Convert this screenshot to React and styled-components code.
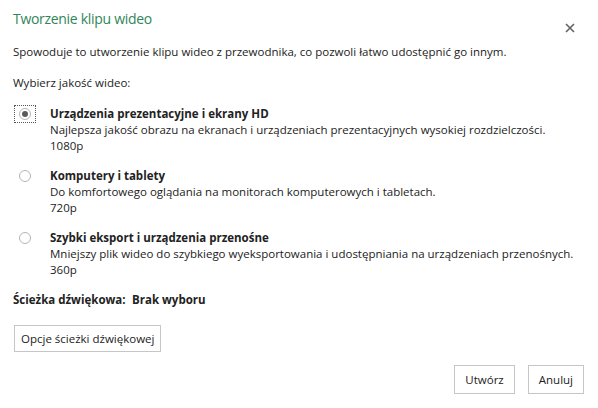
import React from 'react'
import styled, { createGlobalStyle } from 'styled-components'

const GlobalStyle = createGlobalStyle`
  html, body {
    margin: 0;
    padding: 0;
    background: #fff;
  }
  body {
    font-family: "Segoe UI", "Open Sans", "Noto Sans", sans-serif;
    font-size: 11.5px;
    color: #222;
  }
`;

const Dialog = styled.div`
  width: 598px;
  height: 408px;
  box-sizing: border-box;
  padding: 7px 14px 0 13px;
  display: flex;
  flex-direction: column;
`;

const Header = styled.div`
  height: 24px;
  display: flex;
  justify-content: space-between;
  align-items: flex-start;
`;

const Title = styled.h1`
  margin: 0;
  font-size: 14px;
  font-weight: 400;
  letter-spacing: -0.3px;
  line-height: 24px;
  color: #31855a;
`;

const CloseButton = styled.button`
  margin: 14px 7px 0 0;
  padding: 0;
  width: 14px;
  height: 14px;
  border: 0;
  background: none;
  display: flex;
  align-items: center;
  justify-content: center;
`;

const Text = styled.p`
  margin: ${p => p.$top || 0}px 0 0 0;
  line-height: 16px;
`;

const OptionList = styled.div`
  margin-top: 15px;
  display: flex;
  flex-direction: column;
  gap: 14px;
`;

const Option = styled.div`
  display: flex;
  align-items: flex-start;
`;

const RadioBox = styled.div`
  width: 22px;
  height: 18px;
  margin: -1px 14px 0 1px;
  box-sizing: border-box;
  border: 1px dotted ${p => (p.$focused ? '#555' : 'transparent')};
  display: flex;
  align-items: center;
  justify-content: center;
  flex-shrink: 0;
`;

const Radio = styled.span`
  width: 12px;
  height: 12px;
  box-sizing: border-box;
  border-radius: 50%;
  border: 1px solid #b5b5b5;
  background: #fff;
  display: flex;
  align-items: center;
  justify-content: center;

  &::after {
    content: '';
    display: ${p => (p.$checked ? 'block' : 'none')};
    width: 6px;
    height: 6px;
    border-radius: 50%;
    background: #5a5a5a;
  }
`;

const OptionBody = styled.div`
  display: flex;
  flex-direction: column;
  line-height: 16px;
  white-space: nowrap;
`;

const OptionTitle = styled.span`
  font-weight: 700;
`;

const AudioRow = styled.div`
  margin-top: 14px;
  display: flex;
  line-height: 16px;
  font-weight: 700;
`;

const AudioLabel = styled.span`
  width: 119px;
`;

const Button = styled.button`
  font-family: inherit;
  font-size: 11.5px;
  color: #222;
  background: #fff;
  border: 1px solid #c6c6c6;
  height: ${p => p.$h || 27}px;
  padding: 0 ${p => p.$px || 6}px;
  margin: 0;
  cursor: pointer;
`;

const AudioButtonWrap = styled.div`
  margin-top: 17px;
  padding-left: 1px;
`;

const Footer = styled.div`
  margin-top: 13px;
  display: flex;
  justify-content: flex-end;
  gap: 13px;
`;

const options = [
  {
    title: 'Urządzenia prezentacyjne i ekrany HD',
    desc: 'Najlepsza jakość obrazu na ekranach i urządzeniach prezentacyjnych wysokiej rozdzielczości.',
    res: '1080p',
    checked: true,
  },
  {
    title: 'Komputery i tablety',
    desc: 'Do komfortowego oglądania na monitorach komputerowych i tabletach.',
    res: '720p',
  },
  {
    title: 'Szybki eksport i urządzenia przenośne',
    desc: 'Mniejszy plik wideo do szybkiego wyeksportowania i udostępniania na urządzeniach przenośnych.',
    res: '360p',
  },
]

const App = () => {
  return (
    <>
      <GlobalStyle />
      <Dialog>
        <Header>
          <Title>Tworzenie klipu wideo</Title>
          <CloseButton aria-label="Zamknij">
            <svg width="10" height="10" viewBox="0 0 10 10">
              <path d="M1 1 L9 9 M9 1 L1 9" stroke="#666" strokeWidth="1.7" />
            </svg>
          </CloseButton>
        </Header>
        <Text $top={13}>
          Spowoduje to utworzenie klipu wideo z przewodnika, co pozwoli łatwo udostępnić go innym.
        </Text>
        <Text $top={15}>Wybierz jakość wideo:</Text>
        <OptionList>
          {options.map(o => (
            <Option key={o.res}>
              <RadioBox $focused={o.checked}>
                <Radio $checked={o.checked} />
              </RadioBox>
              <OptionBody>
                <OptionTitle>{o.title}</OptionTitle>
                <span>{o.desc}</span>
                <span>{o.res}</span>
              </OptionBody>
            </Option>
          ))}
        </OptionList>
        <AudioRow>
          <AudioLabel>Ścieżka dźwiękowa:</AudioLabel>
          <span>Brak wyboru</span>
        </AudioRow>
        <AudioButtonWrap>
          <Button>Opcje ścieżki dźwiękowej</Button>
        </AudioButtonWrap>
        <Footer>
          <Button $h={29} $px={10}>Utwórz</Button>
          <Button $h={29} $px={10}>Anuluj</Button>
        </Footer>
      </Dialog>
    </>
  )
}

export default App
